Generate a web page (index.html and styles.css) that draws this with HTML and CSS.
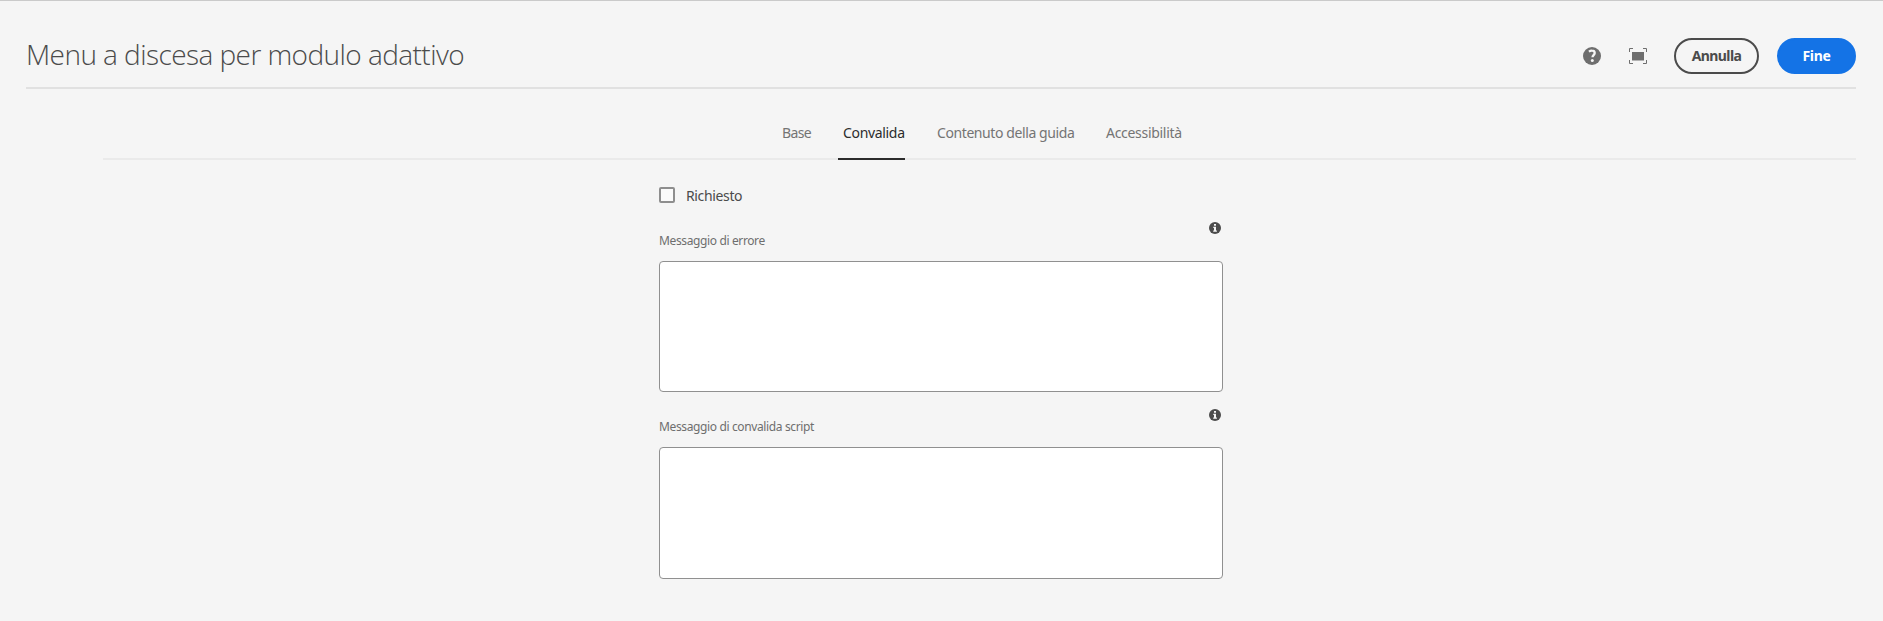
FILE: index.html
```html
<!DOCTYPE html>
<html lang="it">
<head>
<meta charset="utf-8">
<title>Menu a discesa per modulo adattivo</title>
<link rel="stylesheet" href="styles.css">
</head>
<body>
<header class="header">
  <h1 class="title"><span>Menu a discesa per modulo adattivo</span></h1>
  <div class="actions">
    <svg class="help" width="18" height="18" viewBox="0 0 18 18"><circle cx="9" cy="9" r="9" fill="#6e6e6e"/><path d="M5.9 4.600C7 3.900 8 3.600 9 3.700c1.700 0 2.700 1 2.700 2.300 0 2-2.200 2.300-2.200 4.300" fill="none" stroke="#f5f5f5" stroke-width="2.300"/><circle cx="9.300" cy="13.600" r="1.500" fill="#f5f5f5"/></svg>
    <svg class="frame" width="18" height="16" viewBox="0 0 18 16"><path d="M3 4h12v8.500H3z" fill="#6e6e6e"/><path d="M.5 4V.5H4M14 .5h3.500V4M17.500 12v3.500H14M4 15.500H.5V12" fill="none" stroke="#6e6e6e"/></svg>
    <button class="button cancel"><span>Annulla</span></button>
    <button class="button done"><span>Fine</span></button>
  </div>
</header>
<nav class="tabs">
  <a class="tab base"><span>Base</span></a>
  <a class="tab selected"><span>Convalida</span></a>
  <a class="tab content"><span>Contenuto della guida</span></a>
  <a class="tab access"><span>Accessibilità</span></a>
</nav>
<main class="form">
  <label class="check"><i class="box"></i><span>Richiesto</span></label>
  <section class="field">
    <div class="caption"><span class="label-error">Messaggio di errore</span>
      <svg class="info" width="12" height="12" viewBox="0 0 12 12"><circle cx="6" cy="6" r="6" fill="#4b4b4b"/><path d="M5 1.900h2v1.800H5zM4.300 4.800H7v3.800h.9v1.200H4.200V8.600H5V6h-.7z" fill="#f5f5f5"/></svg>
    </div>
    <textarea class="area"></textarea>
  </section>
  <section class="field">
    <div class="caption"><span class="label-script">Messaggio di convalida script</span>
      <svg class="info lower" width="12" height="12" viewBox="0 0 12 12"><circle cx="6" cy="6" r="6" fill="#4b4b4b"/><path d="M5 1.900h2v1.800H5zM4.300 4.800H7v3.800h.9v1.200H4.200V8.600H5V6h-.7z" fill="#f5f5f5"/></svg>
    </div>
    <textarea class="area second"></textarea>
  </section>
</main>
</body>
</html>
```
FILE: styles.css
```css
* { box-sizing: border-box; }
body {
  margin: 0;
  height: 621px;
  overflow: hidden;
  background: #f5f5f5;
  border-top: 1px solid #cacaca;
  font-family: "Noto Sans", "Open Sans", sans-serif;
  color: #4b4b4b;
}
.header {
  display: flex;
  justify-content: space-between;
  height: 88px;
  margin: 0 27px 0 26px;
  border-bottom: 2px solid #e1e1e1;
}
.title {
  margin: 33px 0 0;
  font-family: "Open Sans", "Noto Sans", sans-serif;
  font-size: 28px;
  font-weight: 300;
  line-height: 40px;
  letter-spacing: -0.56px;
  white-space: nowrap;
}
.actions { display: flex; align-items: center; height: 36px; margin-top: 37px; }
.help { margin-right: 28px; }
.frame { margin-right: 27px; }
.button {
  height: 36px;
  padding: 0;
  border: 2px solid #4b4b4b;
  border-radius: 18px;
  background: transparent;
  color: #4b4b4b;
  font: 700 14px/32px "Noto Sans", "Open Sans", sans-serif;
  white-space: nowrap;
}
.cancel { width: 85px; margin-right: 18px; letter-spacing: -0.6px; }
.done { width: 79px; border-color: #1473e6; background: #1473e6; color: #fff; letter-spacing: -0.3px; }
.tabs {
  display: flex;
  height: 71px;
  margin: 0 27px 0 103px;
  padding-left: 679px;
  border-bottom: 2px solid #eaeaea;
  font-size: 14px;
  line-height: 20px;
  color: #747474;
}
.tab { height: 71px; padding-top: 34px; white-space: nowrap; }
.base { width: 56px; letter-spacing: -0.6px; }
.selected { width: 67px; padding-left: 5px; border-bottom: 2px solid #2c2c2c; color: #2c2c2c; letter-spacing: -0.33px; }
.content { width: 169px; margin-left: 32px; letter-spacing: -0.41px; }
.access { letter-spacing: -0.3px; }
.form { width: 564px; margin-left: 659px; padding-top: 24px; }
.check { display: flex; align-items: center; height: 22px; font-size: 14px; letter-spacing: -0.36px; }
.box { width: 16px; height: 16px; margin-right: 11px; border: 2px solid #8e8e8e; border-radius: 2px; background: #fafafa; }
.field { display: flex; flex-direction: column; }
.caption {
  display: flex;
  justify-content: space-between;
  height: 55px;
  padding: 16px 2px 0 0;
  font-size: 12px;
  line-height: 38px;
  color: #6e6e6e;
  white-space: nowrap;
}
.label-error, .label-script { height: 39px; letter-spacing: -0.37px; }
.lower { margin-top: 1px; }
.area {
  display: block;
  width: 564px;
  height: 131px;
  margin: 0;
  border: 1px solid #909090;
  border-radius: 4px;
  background: #fff;
  resize: none;
}
.second { height: 132px; }
```
